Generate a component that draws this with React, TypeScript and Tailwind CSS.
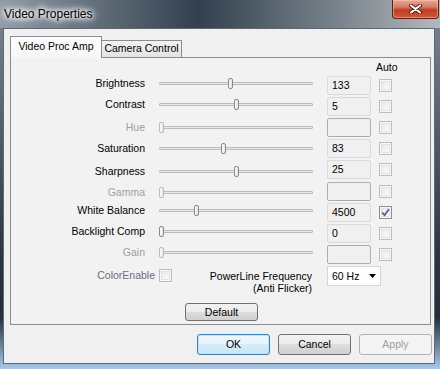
import React from "react";

type Row = {
  label: string;
  value: string;
  pos: number;
  enabled: boolean;
  auto?: boolean;
  shift: string;
  h: string;
};

const rows: Row[] = [
  { label: "Brightness", value: "133", pos: 69, enabled: true, shift: "mb-[5px]", h: "h-[21px]" },
  { label: "Contrast", value: "5", pos: 75, enabled: true, shift: "mb-[5px]", h: "h-[21px]" },
  { label: "Hue", value: "", pos: 0, enabled: false, shift: "mb-[1px]", h: "h-[21px]" },
  { label: "Saturation", value: "83", pos: 62, enabled: true, shift: "mb-[1px]", h: "h-[21px]" },
  { label: "Sharpness", value: "25", pos: 75, enabled: true, shift: "mt-[3px]", h: "h-[22px]" },
  { label: "Gamma", value: "", pos: 0, enabled: false, shift: "mt-[1px]", h: "h-[21px]" },
  { label: "White Balance", value: "4500", pos: 35, enabled: true, auto: true, shift: "mb-[5px]", h: "h-[21px]" },
  { label: "Backlight Comp", value: "0", pos: 0, enabled: true, shift: "mb-[5px]", h: "h-[21px]" },
  { label: "Gain", value: "", pos: 0, enabled: false, shift: "mb-[5px]", h: "h-[21px]" },
];

function CheckBox({ checked }: { checked?: boolean }) {
  return (
    <div className={`size-[13px] shrink-0 border p-px ${checked ? "border-[#8e8f8f]" : "border-[#bdbdbd]"} bg-[#f8f8f8]`}>
      <div className="relative size-full border border-[#e2e2e2] bg-[linear-gradient(135deg,#e9e9e9,#fbfbfb)]">
        {checked && (
          <svg viewBox="0 0 9 9" className="absolute -left-px -top-px size-[9px]">
            <path d="M1.2 4.6 L3.6 7.2 L7.9 1.2" fill="none" stroke="#4a5d96" strokeWidth="1.7" />
          </svg>
        )}
      </div>
    </div>
  );
}

function Slider({ pos, enabled }: { pos: number; enabled: boolean }) {
  return (
    <div className="relative ml-[14px] flex h-[11px] w-[154px] items-center">
      <div className="h-[3px] w-full rounded-[1px] border border-[#bcbcbc] bg-[#e9e9e9]" />
      <div
        className={`absolute top-0 h-[11px] w-[5px] rounded-[2px] border ${enabled ? "border-[#8a8a8a]" : "border-[#bcbcbc]"} bg-[linear-gradient(90deg,#fdfdfd,#e2e2e2)]`}
        style={{ left: pos }}
      />
    </div>
  );
}

function Btn({ label, variant }: { label: string; variant?: "default" | "disabled" }) {
  const cls =
    variant === "default"
      ? "border-[#3c7fb1] bg-[linear-gradient(#eef7fd,#e6f3fc_50%,#d6ebf9_50%,#c9e4f6)] shadow-[inset_0_0_0_1px_#bfe3f9] text-black"
      : variant === "disabled"
        ? "border-[#adb2b5] bg-[#f4f4f4] text-[#a0a0a0]"
        : "border-[#707070] bg-[linear-gradient(#f2f2f2,#ebebeb_50%,#dddddd_50%,#cfcfcf)] text-black";
  return (
    <div className={`flex h-[21px] w-[73px] items-center justify-center rounded-[3px] border ${cls}`}>
      {label}
    </div>
  );
}

export default function App() {
  return (
    <div className="flex h-[369px] w-[440px] flex-col overflow-hidden bg-[linear-gradient(#7d8994,#2a3541_70%,#24303d_86%,#a9c8ea)] font-['Liberation_Sans',Arial,sans-serif] text-[10.5px] leading-[13px] text-black">
      {/* title bar */}
      <div className="flex h-[28px] shrink-0 items-start bg-linear-to-r from-[#929ea8] via-[#33414e] via-45% to-[#b3b8bc]">
        <div className="ml-[4px] mt-[6px] text-[12px] leading-[16px] text-black [text-shadow:0_0_8px_#fff,0_0_8px_#fff,0_0_6px_#fff,0_0_4px_#fff]">
          Video Properties
        </div>
        <div className="ml-auto mr-[1px] flex h-[19px] w-[47px] items-center justify-center rounded-b-[4px] border border-t-0 border-[#5a2018] bg-[linear-gradient(#e8a898,#d27a62_40%,#c23b1f_55%,#cf5a3c)] shadow-[inset_0_0_0_1px_rgba(255,200,180,0.5)]">
          <svg viewBox="0 0 13 10" className="h-[10px] w-[13px]">
            <path d="M2 1.5 L11 8.5 M11 1.5 L2 8.5" stroke="#4a1d14" strokeWidth="4" strokeLinecap="round" />
            <path d="M2 1.5 L11 8.5 M11 1.5 L2 8.5" stroke="#ffffff" strokeWidth="2.2" strokeLinecap="round" />
          </svg>
        </div>
      </div>

      {/* client area */}
      <div className="ml-[3px] h-[336px] w-[432px] border border-[#5e6a76] bg-[#f0f0f0]">
        {/* tabs */}
        <div className="ml-[6px] mt-[7px] flex h-[21px] items-end">
          <div className="relative z-10 -mb-px flex h-[22px] w-[92px] items-center justify-center border border-b-0 border-[#898c95] bg-[linear-gradient(#ffffff,#f6f6f6)] pb-[2px]">
            Video Proc Amp
          </div>
          <div className="flex h-[17px] w-[80px] items-center justify-center border border-l-0 border-b-0 border-[#898c95] bg-[linear-gradient(#f2f2f2,#e3e3e3)] pb-px">
            Camera Control
          </div>
        </div>

        {/* panel */}
        <div className="ml-[6px] h-[268px] w-[421px] border border-[#898c95] bg-[#f2f2f2]">
          <div className="flex h-[18px] items-center pl-[365px]">Auto</div>

          {rows.map((r) => (
            <div key={r.label} className={`flex items-start ${r.h}`}>
              <div className="flex h-[19px] items-center">
                <div className={`flex items-center ${r.shift}`}>
                  <div className={`w-[134px] text-right ${r.enabled ? "text-black" : "text-[#a0a0a0]"}`}>{r.label}</div>
                  <Slider pos={r.pos} enabled={r.enabled} />
                </div>
                <div
                  className={`ml-[14px] flex h-[19px] w-[44px] items-center rounded-[2px] border pl-[4px] ${r.enabled ? "border-[#dadada]" : "border-[#adadad]"} bg-[#f0f0f0]`}
                >
                  {r.value}
                </div>
                <div className="ml-[8px]">
                  <CheckBox checked={r.auto} />
                </div>
              </div>
            </div>
          ))}

          {/* color enable / powerline */}
          <div className="flex h-[37px] items-start">
            <div className="mt-[3px] flex items-center">
              <div className="w-[144px] text-right text-[#6b6b82]">ColorEnable</div>
              <div className="ml-[4px]">
                <CheckBox />
              </div>
            </div>
            <div className="mt-[4px] w-[140px] text-right leading-[12px]">
              <div>PowerLine Frequency</div>
              <div>(Anti Flicker)</div>
            </div>
            <div className="ml-[15px] flex h-[20px] w-[54px] items-center justify-between border border-[#d6d6d6] bg-white pl-[4px] pr-[4px]">
              <span>60 Hz</span>
              <svg viewBox="0 0 7 4" className="h-[4px] w-[7px]">
                <path d="M0 0 H7 L3.5 4 Z" fill="#000" />
              </svg>
            </div>
          </div>

          <div className="ml-[174px] flex h-[18px] w-[73px] items-center justify-center rounded-[3px] border border-[#707070] bg-[linear-gradient(#f2f2f2,#ebebeb_50%,#dddddd_50%,#cfcfcf)]">
            Default
          </div>
        </div>

        {/* dialog buttons */}
        <div className="mt-[9px] flex justify-end gap-[8px] pr-[2px]">
          <Btn label="OK" variant="default" />
          <Btn label="Cancel" />
          <Btn label="Apply" variant="disabled" />
        </div>
      </div>
    </div>
  );
}
